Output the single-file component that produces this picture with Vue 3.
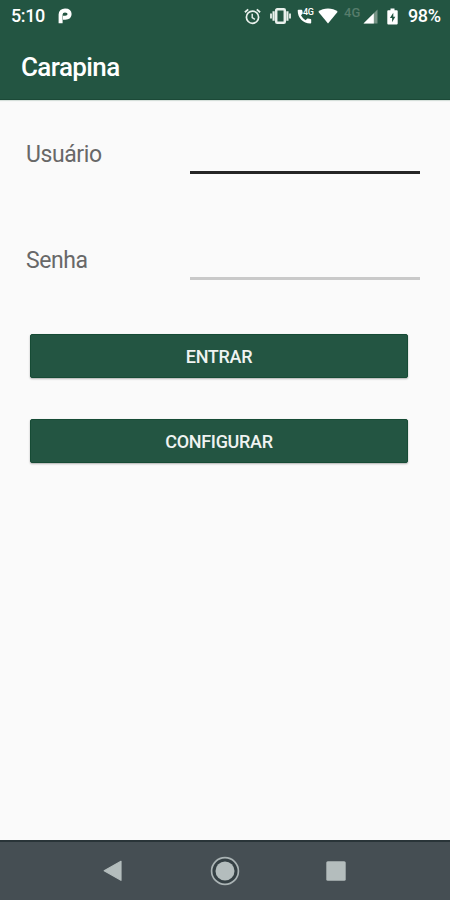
<script setup>
import { ref } from 'vue'

const username = ref('')
const password = ref('')
</script>

<template>
  <div class="screen">
    <header class="top">
      <div class="status">
        <span class="clock">5:10</span>
        <svg class="app-mark" width="14" height="16" viewBox="0 0 14 16">
          <path d="M2.600 15.300V6.400C2.600 4 4.400 2.400 7 2.400c2.800 0 4.600 1.400 4.600 3.700S9.800 9.700 7.200 9.700H5" fill="none" stroke="#fff" stroke-width="4" />
        </svg>
        <svg class="alarm" width="17" height="17" viewBox="0 0 17 17" fill="none" stroke="#e9f0ec">
          <circle cx="8.500" cy="9.200" r="6.100" stroke-width="1.700" />
          <path d="M.9 4.300 4.200 1.400M16.100 4.300l-3.300-2.900" stroke-width="1.800" />
          <path d="M8.200 5.700v4l2.700 1.700" stroke-width="1.400" />
        </svg>
        <svg class="vibrate" width="21" height="16" viewBox="0 0 21 16" fill="none" stroke="#e9f0ec">
          <rect x="6.200" y="1.300" width="8.600" height="13.400" rx="1" stroke-width="2.500" />
          <path d="M3.600 3.300v9.400M17.400 3.300v9.400" stroke-width="2.200" />
          <path d="M1 5.500v5M20 5.500v5" stroke-width="1.800" />
        </svg>
        <div class="call">
          <svg width="17" height="16" viewBox="0 0 17 16">
            <path d="M.7 2.500C.7 10 6 15.300 13.400 15.500c.5 0 .8-.3.800-.8v-2.900c0-.4-.2-.7-.6-.8l-2.700-.5c-.3 0-.6 0-.8.300l-1.500 1.500C6.900 11.300 5.100 9.500 4 7.300l1.500-1.600c.2-.2.3-.5.200-.8L5.300 2.400C5.200 2 4.900 1.800 4.500 1.800h-3c-.5 0-.8.300-.8.700Z" fill="#fff" />
          </svg>
          <span class="call-net">4G</span>
        </div>
        <svg class="wifi" width="20" height="16" viewBox="0 0 20 16">
          <path d="M10 15.500.3 3.700C3 1.600 6.300.5 10 .5s7 1.100 9.700 3.200Z" fill="#fff" />
        </svg>
        <span class="net">4G</span>
        <svg class="signal" width="15" height="15" viewBox="0 0 15 15">
          <path d="M14.500.5v14H.5Z" fill="#779486" />
          <path d="M10.800 4.200v10.300H.5Z" fill="#fff" />
        </svg>
        <svg class="battery" width="11" height="17" viewBox="0 0 11 17">
          <path d="M3.500.5h4v1.700h2.300c.5 0 .9.4.9.9v12.500c0 .5-.4.900-.9.900H1.200c-.5 0-.9-.4-.9-.9V3.100c0-.5.400-.9.900-.9h2.300Z" fill="#fff" />
          <path d="M6.300 4.700 2.900 10h2.200v4.200l3.200-5.500H6.300Z" fill="#235542" />
        </svg>
        <span class="percent">98%</span>
      </div>
      <h1 class="title">Carapina</h1>
    </header>

    <main class="content">
      <label class="field">
        <span class="label">Usuário</span>
        <input v-model="username" class="input active" type="text" />
      </label>
      <label class="field">
        <span class="label">Senha</span>
        <input v-model="password" class="input" type="password" />
      </label>
      <div class="actions">
        <button class="button" type="button">ENTRAR</button>
        <button class="button" type="button">CONFIGURAR</button>
      </div>
    </main>

    <nav class="navbar">
      <svg width="20" height="22" viewBox="0 0 20 22">
        <path d="M18 1.300v19L1.200 10.800Z" fill="#b4bdbd" stroke="#b4bdbd" stroke-width="1.200" stroke-linejoin="round" />
      </svg>
      <svg width="30" height="30" viewBox="0 0 30 30">
        <circle cx="15" cy="15" r="13.400" fill="#354044" stroke="#aab3b4" stroke-width="1.700" />
        <circle cx="15" cy="15" r="9.500" fill="#b4bdbd" />
      </svg>
      <svg width="20" height="20" viewBox="0 0 20 20">
        <rect x=".3" y=".3" width="19.400" height="19.400" rx="1.500" fill="#b4bdbd" />
      </svg>
    </nav>
  </div>
</template>

<style>
body {
  margin: 0;
}
</style>

<style scoped>
.screen {
  display: flex;
  flex-direction: column;
  width: 450px;
  height: 900px;
  overflow: hidden;
  background: #fafafa;
  font-family: Roboto, "Liberation Sans", sans-serif;
}

.top {
  box-sizing: border-box;
  height: 100px;
  flex: none;
  background: #235542;
  border-bottom: 1px solid #1b4937;
  box-shadow: 0 1px 1px #d5dfda;
  color: #fff;
}

.status {
  display: flex;
  align-items: center;
  height: 32px;
}

.status svg {
  display: block;
  flex: none;
}

.clock {
  width: 47px;
  padding-left: 11px;
  font-size: 18px;
  font-weight: 500;
  line-height: 20px;
  letter-spacing: -0.4px;
}

.alarm {
  margin-left: 172px;
}

.vibrate {
  margin-left: 9px;
}

.call {
  position: relative;
  margin-left: 6px;
  width: 17px;
}

.call-net {
  position: absolute;
  top: 0;
  left: 6px;
  font-size: 9px;
  font-weight: 500;
  line-height: 9px;
  letter-spacing: -0.3px;
}

.wifi {
  margin-left: 4px;
}

.net {
  width: 19px;
  margin-left: 6px;
  padding-bottom: 6px;
  font-size: 13px;
  font-weight: 500;
  line-height: 12px;
  color: #567c6b;
}

.battery {
  margin-left: 9px;
}

.percent {
  margin-left: 10px;
  font-size: 18px;
  font-weight: 500;
  line-height: 20px;
  letter-spacing: -0.4px;
}

.title {
  margin: 19px 0 0 21px;
  font-size: 26px;
  font-weight: 500;
  line-height: 32px;
  letter-spacing: -0.6px;
}

.content {
  flex: 1;
  padding: 35px 30px 0 26px;
}

.field {
  display: flex;
  height: 38px;
  margin-bottom: 68px;
}

.label {
  box-sizing: border-box;
  width: 165px;
  font-size: 23px;
  line-height: 40px;
  letter-spacing: -0.4px;
  color: #686868;
}

.input {
  box-sizing: border-box;
  width: 230px;
  height: 39px;
  padding: 0;
  border: 0;
  border-bottom: 3px solid #c9c9c9;
  border-radius: 0;
  outline: 0;
  background: transparent;
  font: inherit;
  font-size: 20px;
}

.input.active {
  border-bottom-color: #252525;
}

.actions {
  display: flex;
  flex-direction: column;
  gap: 41px;
  margin-top: -13px;
  padding: 0 12px 0 4px;
}

.button {
  height: 44px;
  padding: 0;
  border: 1px solid #164b35;
  border-radius: 2px;
  background: #235542;
  box-shadow: 0 1px 2px rgba(0, 0, 0, 0.3);
  color: #eff3f1;
  font: inherit;
  font-size: 18px;
  font-weight: 500;
  letter-spacing: -0.3px;
}

.navbar {
  box-sizing: border-box;
  display: flex;
  align-items: center;
  justify-content: space-between;
  height: 60px;
  flex: none;
  padding: 0 104px 0 103px;
  border-top: 2px solid #293438;
  background: #454e53;
}
</style>
